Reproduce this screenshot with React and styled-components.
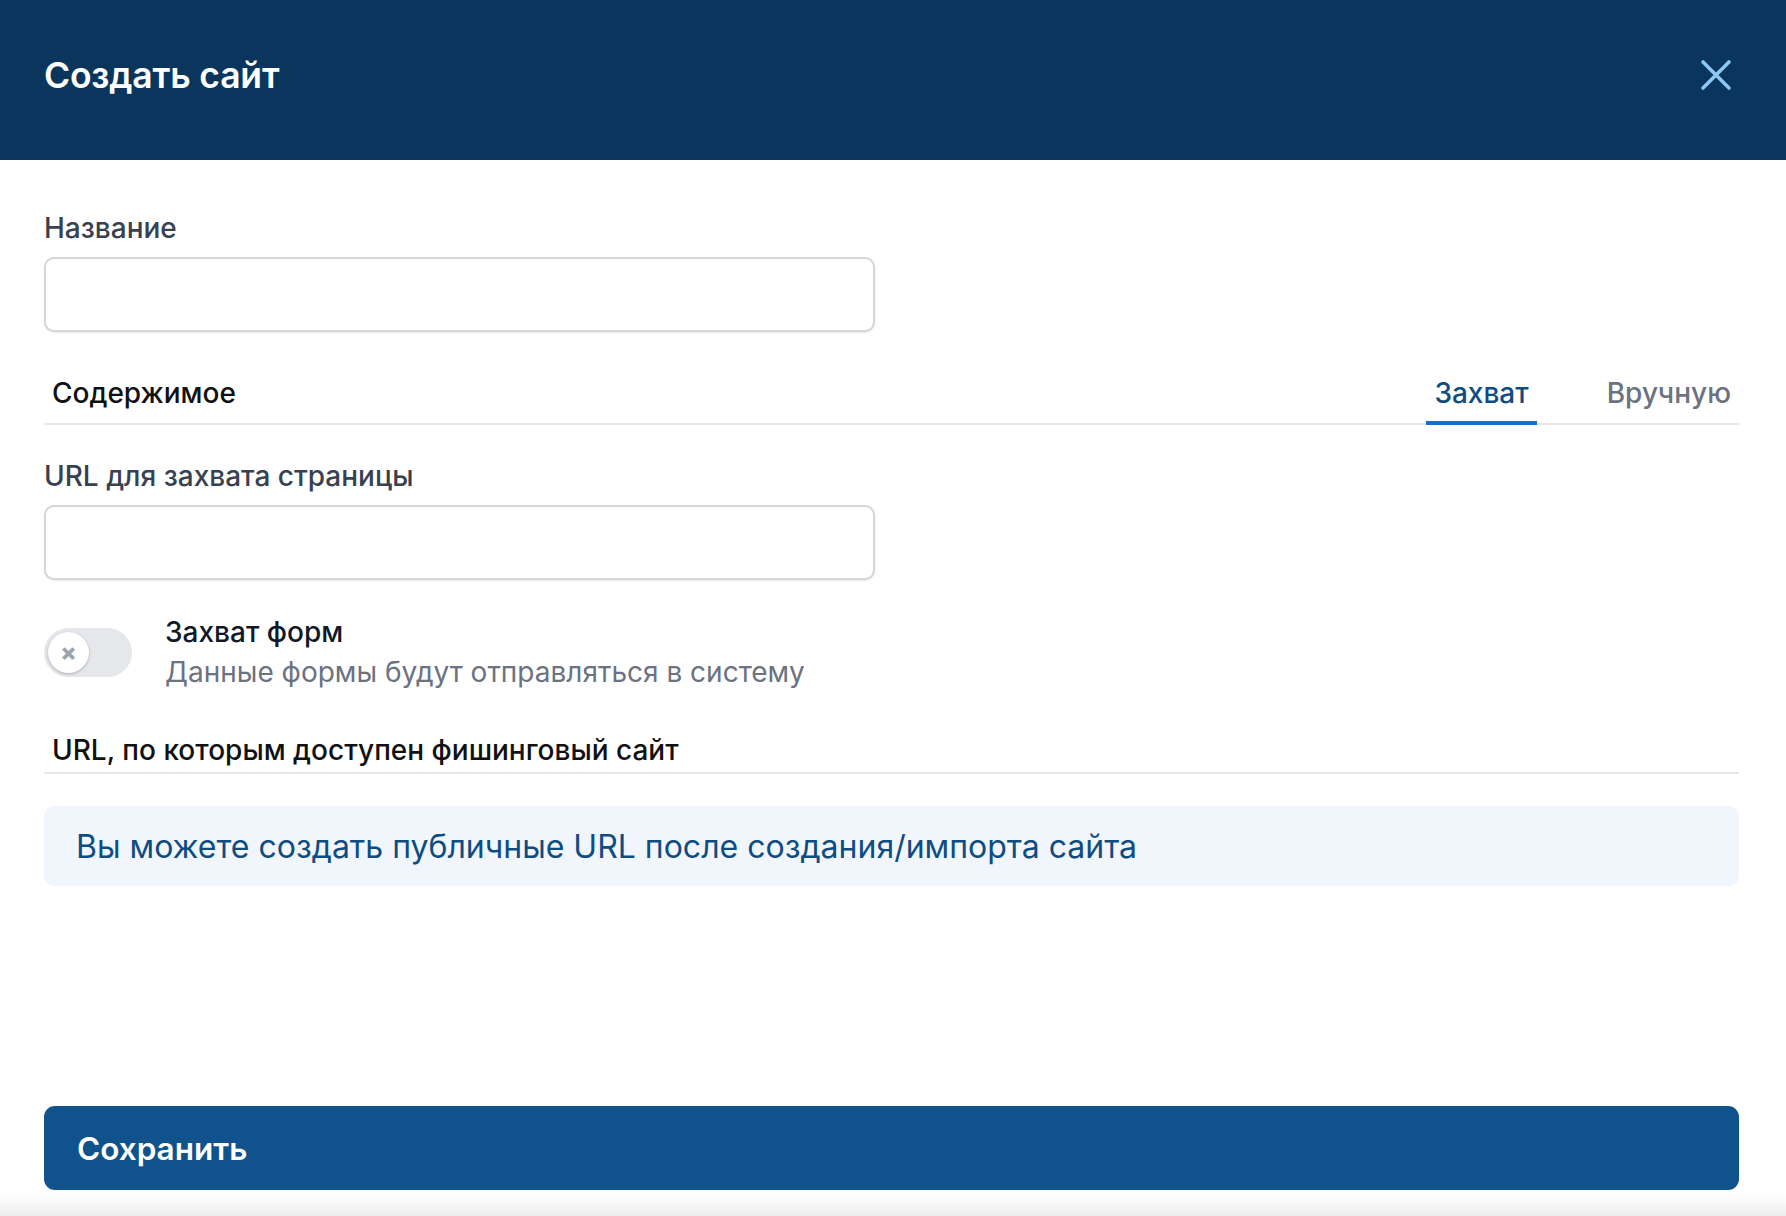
import styled, { createGlobalStyle } from "styled-components";

const GlobalStyle = createGlobalStyle`
  * { box-sizing: border-box; }
  body {
    margin: 0;
    font-family: Inter, "Noto Sans", sans-serif;
    background: #ffffff;
  }
`;

const CloseIcon = () => (
  <svg width="32" height="32" viewBox="0 0 32 32" fill="none">
    <path
      d="M3 3L29 29M29 3L3 29"
      stroke="#8cc8f5"
      strokeWidth="3.6"
      strokeLinecap="round"
    />
  </svg>
);

const App = () => {
  return (
    <>
      <GlobalStyle />
      <Page>
        <Header>
          <Title>Создать сайт</Title>
          <CloseButton aria-label="Закрыть">
            <CloseIcon />
          </CloseButton>
        </Header>
        <Body>
          <Label>Название</Label>
          <Input />

          <TabBar>
            <Tab $plain>Содержимое</Tab>
            <Tabs>
              <Tab $active>Захват</Tab>
              <Tab>Вручную</Tab>
            </Tabs>
          </TabBar>

          <Label $top={35}>URL для захвата страницы</Label>
          <Input />

          <SwitchRow>
            <Switch>
              <Knob>×</Knob>
            </Switch>
            <SwitchText>
              <SwitchTitle>Захват форм</SwitchTitle>
              <SwitchHint>Данные формы будут отправляться в систему</SwitchHint>
            </SwitchText>
          </SwitchRow>

          <SectionTitle>URL, по которым доступен фишинговый сайт</SectionTitle>
          <Notice>Вы можете создать публичные URL после создания/импорта сайта</Notice>
        </Body>
        <Footer>
          <SaveButton>Сохранить</SaveButton>
        </Footer>
      </Page>
    </>
  );
};

export default App;

const Page = styled.div`
  display: flex;
  flex-direction: column;
  min-height: 100vh;
`;

const Header = styled.header`
  height: 160px;
  background: #0a355c;
  display: flex;
  align-items: center;
  justify-content: space-between;
  padding: 0 54px 10px 44px;
`;

const Title = styled.h1`
  margin: 0;
  color: #ffffff;
  font-size: 35.5px;
  font-weight: 600;
  letter-spacing: -0.2px;
`;

const CloseButton = styled.button`
  border: 0;
  background: none;
  padding: 0;
  display: flex;
  cursor: pointer;
`;

const Body = styled.main`
  flex: 1;
  padding: 52px 47px 0 44px;
  display: flex;
  flex-direction: column;
`;

const Label = styled.label`
  display: block;
  margin-top: ${(p) => p.$top || 0}px;
  margin-bottom: 13px;
  font-size: 28px;
  line-height: 32px;
  font-weight: 500;
  color: #374151;
`;

const Input = styled.input`
  width: 831px;
  height: 75px;
  border: 2px solid #d4d6dc;
  border-radius: 10px;
  box-shadow: 0 1px 2px rgba(0, 0, 0, 0.08);
  background: #fff;
  font-size: 28px;
  padding: 0 18px;
  outline: none;
`;

const TabBar = styled.div`
  margin-top: 37px;
  display: flex;
  justify-content: space-between;
  align-items: flex-end;
  border-bottom: 2px solid #e5e7eb;
`;

const Tabs = styled.div`
  display: flex;
  gap: 62px;
`;

const Tab = styled.div`
  padding: 8px 8px 12px;
  margin-bottom: -2px;
  font-size: 28px;
  line-height: 32px;
  font-weight: 500;
  color: ${(p) => (p.$plain ? "#111111" : p.$active ? "#0f4c81" : "#6b7280")};
  border-bottom: 4px solid ${(p) => (p.$active ? "#1b6ec2" : "transparent")};
`;

const SwitchRow = styled.div`
  margin-top: 36px;
  display: flex;
  align-items: flex-start;
  gap: 33px;
`;

const Switch = styled.div`
  margin-top: 12px;
  width: 88px;
  height: 49px;
  border-radius: 25px;
  background: #e5e7eb;
  display: flex;
  align-items: center;
  padding-left: 4px;
  flex-shrink: 0;
`;

const Knob = styled.span`
  width: 41px;
  height: 41px;
  border-radius: 50%;
  background: #ffffff;
  box-shadow: 0 1px 3px rgba(0, 0, 0, 0.25);
  display: flex;
  align-items: center;
  justify-content: center;
  color: #9ca3af;
  font-size: 24px;
  font-weight: 800;
  line-height: 1;
`;

const SwitchText = styled.div`
  display: flex;
  flex-direction: column;
  gap: 8px;
`;

const SwitchTitle = styled.div`
  font-size: 28px;
  line-height: 32px;
  font-weight: 500;
  color: #111827;
`;

const SwitchHint = styled.div`
  font-size: 28px;
  line-height: 32px;
  color: #6b7280;
`;

const SectionTitle = styled.div`
  margin-top: 46px;
  padding: 0 8px 6px;
  border-bottom: 2px solid #e5e7eb;
  font-size: 28px;
  line-height: 32px;
  font-weight: 500;
  color: #111111;
`;

const Notice = styled.div`
  margin-top: 32px;
  height: 80px;
  display: flex;
  align-items: center;
  padding: 0 32px;
  border-radius: 10px;
  background: #f1f6fd;
  color: #0f4c81;
  font-size: 32px;
`;

const Footer = styled.footer`
  padding: 0 47px 26px 44px;
  background: linear-gradient(to bottom, #ffffff 80%, #eeeeee 100%);
`;

const SaveButton = styled.button`
  width: 100%;
  height: 84px;
  border: 0;
  border-radius: 11px;
  background: #10528b;
  color: #ffffff;
  font-family: inherit;
  font-size: 31.5px;
  font-weight: 600;
  text-align: left;
  padding: 0 33px;
  cursor: pointer;
`;
